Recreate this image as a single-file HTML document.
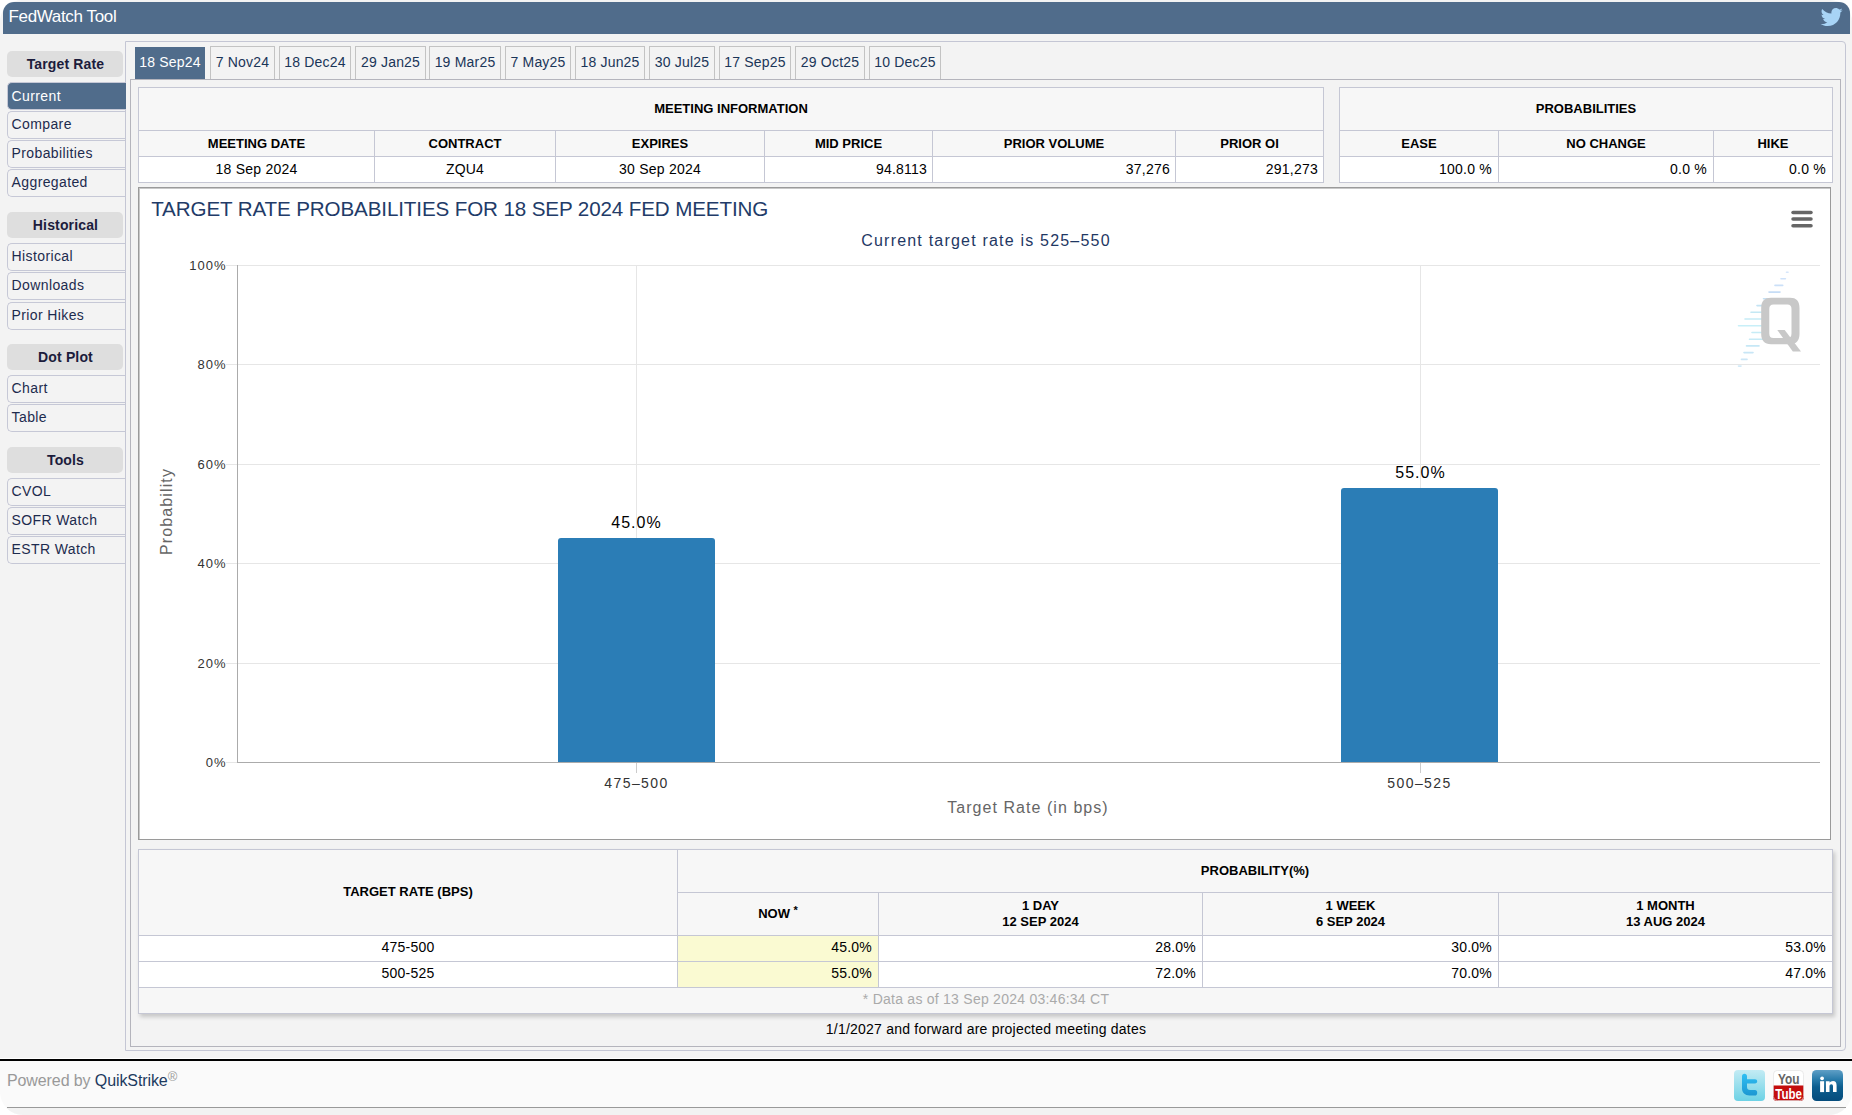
<!DOCTYPE html>
<html><head><meta charset="utf-8"><title>FedWatch Tool</title>
<style>
html,body{margin:0;padding:0;}
body{width:1852px;height:1115px;position:relative;overflow:hidden;background:#fff;font-family:"Liberation Sans", sans-serif;}
.t{position:absolute;white-space:nowrap;}
.r{position:absolute;box-sizing:border-box;}
</style></head><body>
<div class="r" style="left:0px;top:0px;width:1852px;height:1058px;background:#f3f3f3;border-radius:22px 22px 0 0;"></div><div class="r" style="left:3px;top:2px;width:1847px;height:32px;background:#506c8b;border-radius:11px 11px 0 0;"></div><div class="t" style="left:8.5px;top:7.61px;font-size:17px;line-height:17px;font-weight:normal;color:#fff;letter-spacing:-0.35px;">FedWatch Tool</div><svg style="position:absolute;left:1820px;top:6px" width="24" height="22" viewBox="0 0 24 24"><path fill="#a8d4f6" d="M23.6 4.6c-.9.4-1.8.6-2.8.8 1-.6 1.8-1.6 2.1-2.7-1 .6-2 1-3.1 1.2C18.9 2.9 17.6 2.3 16.2 2.3c-2.7 0-4.9 2.2-4.9 4.9 0 .4 0 .8.1 1.1C7.3 8.100 3.700 6.200 1.300 3.200c-.4.700-.7 1.600-.7 2.500 0 1.700.9 3.200 2.200 4.100-.8 0-1.600-.2-2.200-.6v.1c0 2.400 1.700 4.400 3.900 4.800-.4.1-.8.2-1.300.2-.3 0-.6 0-.9-.1.6 2 2.400 3.400 4.600 3.400-1.700 1.300-3.800 2.100-6.100 2.100-.4 0-.8 0-1.200-.1 2.200 1.400 4.800 2.200 7.500 2.200 9.100 0 14-7.500 14-14v-.6c1-.7 1.800-1.600 2.500-2.500z"/></svg><div class="r" style="left:125px;top:41px;width:1721px;height:1010px;border:1px solid #c4c6d4;border-radius:0 4px 4px 0;background:#f3f3f3;"></div><div class="r" style="left:135px;top:47px;width:70px;height:33px;background:#506c8b;"></div><div class="t" style="left:135.0px;width:70px;text-align:center;top:54.85px;font-size:14px;line-height:14px;font-weight:normal;color:#fff;letter-spacing:0.2px;">18 Sep24</div><div class="r" style="left:210px;top:46px;width:65px;height:34px;background:#f3f3f3;border:1px solid #c3c3c3;border-bottom:none;"></div><div class="t" style="left:210.0px;width:65px;text-align:center;top:54.85px;font-size:14px;line-height:14px;font-weight:normal;color:#1a3558;letter-spacing:0.2px;">7 Nov24</div><div class="r" style="left:279px;top:46px;width:72px;height:34px;background:#f3f3f3;border:1px solid #c3c3c3;border-bottom:none;"></div><div class="t" style="left:279.0px;width:72px;text-align:center;top:54.85px;font-size:14px;line-height:14px;font-weight:normal;color:#1a3558;letter-spacing:0.2px;">18 Dec24</div><div class="r" style="left:355px;top:46px;width:71px;height:34px;background:#f3f3f3;border:1px solid #c3c3c3;border-bottom:none;"></div><div class="t" style="left:355.0px;width:71px;text-align:center;top:54.85px;font-size:14px;line-height:14px;font-weight:normal;color:#1a3558;letter-spacing:0.2px;">29 Jan25</div><div class="r" style="left:429px;top:46px;width:72px;height:34px;background:#f3f3f3;border:1px solid #c3c3c3;border-bottom:none;"></div><div class="t" style="left:429.0px;width:72px;text-align:center;top:54.85px;font-size:14px;line-height:14px;font-weight:normal;color:#1a3558;letter-spacing:0.2px;">19 Mar25</div><div class="r" style="left:505px;top:46px;width:66px;height:34px;background:#f3f3f3;border:1px solid #c3c3c3;border-bottom:none;"></div><div class="t" style="left:505.0px;width:66px;text-align:center;top:54.85px;font-size:14px;line-height:14px;font-weight:normal;color:#1a3558;letter-spacing:0.2px;">7 May25</div><div class="r" style="left:575px;top:46px;width:70px;height:34px;background:#f3f3f3;border:1px solid #c3c3c3;border-bottom:none;"></div><div class="t" style="left:575.0px;width:70px;text-align:center;top:54.85px;font-size:14px;line-height:14px;font-weight:normal;color:#1a3558;letter-spacing:0.2px;">18 Jun25</div><div class="r" style="left:649px;top:46px;width:66px;height:34px;background:#f3f3f3;border:1px solid #c3c3c3;border-bottom:none;"></div><div class="t" style="left:649.0px;width:66px;text-align:center;top:54.85px;font-size:14px;line-height:14px;font-weight:normal;color:#1a3558;letter-spacing:0.2px;">30 Jul25</div><div class="r" style="left:719px;top:46px;width:72px;height:34px;background:#f3f3f3;border:1px solid #c3c3c3;border-bottom:none;"></div><div class="t" style="left:719.0px;width:72px;text-align:center;top:54.85px;font-size:14px;line-height:14px;font-weight:normal;color:#1a3558;letter-spacing:0.2px;">17 Sep25</div><div class="r" style="left:795px;top:46px;width:70px;height:34px;background:#f3f3f3;border:1px solid #c3c3c3;border-bottom:none;"></div><div class="t" style="left:795.0px;width:70px;text-align:center;top:54.85px;font-size:14px;line-height:14px;font-weight:normal;color:#1a3558;letter-spacing:0.2px;">29 Oct25</div><div class="r" style="left:869px;top:46px;width:72px;height:34px;background:#f3f3f3;border:1px solid #c3c3c3;border-bottom:none;"></div><div class="t" style="left:869.0px;width:72px;text-align:center;top:54.85px;font-size:14px;line-height:14px;font-weight:normal;color:#1a3558;letter-spacing:0.2px;">10 Dec25</div><div class="r" style="left:130px;top:79px;width:1711px;height:968px;border:1px solid #b4b4bc;background:#f3f3f3;"></div><div class="r" style="left:7px;top:51px;width:116px;height:26px;background:#dedede;border-radius:5px;"></div><div class="t" style="left:7.5px;width:116px;text-align:center;top:57.05px;font-size:14px;line-height:14px;font-weight:bold;color:#1c1c3c;letter-spacing:0.15px;">Target Rate</div><div class="r" style="left:7px;top:82px;width:119px;height:28px;background:#506c8b;border:1px solid #c6c8d6;border-right:none;border-radius:5px 0 0 5px;"></div><div class="t" style="left:11.6px;top:88.95px;font-size:14px;line-height:14px;font-weight:normal;color:#fff;letter-spacing:0.38px;">Current</div><div class="r" style="left:7px;top:111px;width:118px;height:28px;background:#f3f3f3;border:1px solid #c6c8d6;border-right:none;border-radius:5px 0 0 5px;"></div><div class="t" style="left:11.6px;top:117.15px;font-size:14px;line-height:14px;font-weight:normal;color:#1d2b4e;letter-spacing:0.38px;">Compare</div><div class="r" style="left:7px;top:140px;width:118px;height:28px;background:#f3f3f3;border:1px solid #c6c8d6;border-right:none;border-radius:5px 0 0 5px;"></div><div class="t" style="left:11.6px;top:146.15px;font-size:14px;line-height:14px;font-weight:normal;color:#1d2b4e;letter-spacing:0.38px;">Probabilities</div><div class="r" style="left:7px;top:169px;width:118px;height:28px;background:#f3f3f3;border:1px solid #c6c8d6;border-right:none;border-radius:5px 0 0 5px;"></div><div class="t" style="left:11.6px;top:175.15px;font-size:14px;line-height:14px;font-weight:normal;color:#1d2b4e;letter-spacing:0.38px;">Aggregated</div><div class="r" style="left:7px;top:212px;width:116px;height:26px;background:#dedede;border-radius:5px;"></div><div class="t" style="left:7.5px;width:116px;text-align:center;top:218.05px;font-size:14px;line-height:14px;font-weight:bold;color:#1c1c3c;letter-spacing:0.15px;">Historical</div><div class="r" style="left:7px;top:243px;width:118px;height:28px;background:#f3f3f3;border:1px solid #c6c8d6;border-right:none;border-radius:5px 0 0 5px;"></div><div class="t" style="left:11.6px;top:249.15px;font-size:14px;line-height:14px;font-weight:normal;color:#1d2b4e;letter-spacing:0.38px;">Historical</div><div class="r" style="left:7px;top:272px;width:118px;height:28px;background:#f3f3f3;border:1px solid #c6c8d6;border-right:none;border-radius:5px 0 0 5px;"></div><div class="t" style="left:11.6px;top:278.15px;font-size:14px;line-height:14px;font-weight:normal;color:#1d2b4e;letter-spacing:0.38px;">Downloads</div><div class="r" style="left:7px;top:302px;width:118px;height:28px;background:#f3f3f3;border:1px solid #c6c8d6;border-right:none;border-radius:5px 0 0 5px;"></div><div class="t" style="left:11.6px;top:308.15px;font-size:14px;line-height:14px;font-weight:normal;color:#1d2b4e;letter-spacing:0.38px;">Prior Hikes</div><div class="r" style="left:7px;top:344px;width:116px;height:26px;background:#dedede;border-radius:5px;"></div><div class="t" style="left:7.5px;width:116px;text-align:center;top:350.05px;font-size:14px;line-height:14px;font-weight:bold;color:#1c1c3c;letter-spacing:0.15px;">Dot Plot</div><div class="r" style="left:7px;top:375px;width:118px;height:28px;background:#f3f3f3;border:1px solid #c6c8d6;border-right:none;border-radius:5px 0 0 5px;"></div><div class="t" style="left:11.6px;top:381.15px;font-size:14px;line-height:14px;font-weight:normal;color:#1d2b4e;letter-spacing:0.38px;">Chart</div><div class="r" style="left:7px;top:404px;width:118px;height:28px;background:#f3f3f3;border:1px solid #c6c8d6;border-right:none;border-radius:5px 0 0 5px;"></div><div class="t" style="left:11.6px;top:410.15px;font-size:14px;line-height:14px;font-weight:normal;color:#1d2b4e;letter-spacing:0.38px;">Table</div><div class="r" style="left:7px;top:447px;width:116px;height:26px;background:#dedede;border-radius:5px;"></div><div class="t" style="left:7.5px;width:116px;text-align:center;top:453.05px;font-size:14px;line-height:14px;font-weight:bold;color:#1c1c3c;letter-spacing:0.15px;">Tools</div><div class="r" style="left:7px;top:478px;width:118px;height:28px;background:#f3f3f3;border:1px solid #c6c8d6;border-right:none;border-radius:5px 0 0 5px;"></div><div class="t" style="left:11.6px;top:484.15px;font-size:14px;line-height:14px;font-weight:normal;color:#1d2b4e;letter-spacing:0.38px;">CVOL</div><div class="r" style="left:7px;top:507px;width:118px;height:28px;background:#f3f3f3;border:1px solid #c6c8d6;border-right:none;border-radius:5px 0 0 5px;"></div><div class="t" style="left:11.6px;top:513.15px;font-size:14px;line-height:14px;font-weight:normal;color:#1d2b4e;letter-spacing:0.38px;">SOFR Watch</div><div class="r" style="left:7px;top:536px;width:118px;height:28px;background:#f3f3f3;border:1px solid #c6c8d6;border-right:none;border-radius:5px 0 0 5px;"></div><div class="t" style="left:11.6px;top:542.15px;font-size:14px;line-height:14px;font-weight:normal;color:#1d2b4e;letter-spacing:0.38px;">ESTR Watch</div><div class="r" style="left:138px;top:87px;width:1186px;height:96px;background:#f7f7f7;"></div><div class="r" style="left:138px;top:156px;width:1186px;height:27px;background:#fff;"></div><div class="r" style="left:138px;top:87px;width:1186px;height:1px;background:#c5c7d4"></div><div class="r" style="left:138px;top:130px;width:1186px;height:1px;background:#c5c7d4"></div><div class="r" style="left:138px;top:156px;width:1186px;height:1px;background:#c5c7d4"></div><div class="r" style="left:138px;top:182px;width:1186px;height:1px;background:#c5c7d4"></div><div class="r" style="left:138px;top:87px;width:1px;height:96px;background:#c5c7d4"></div><div class="r" style="left:1323px;top:87px;width:1px;height:96px;background:#c5c7d4"></div><div class="r" style="left:374px;top:130px;width:1px;height:53px;background:#c5c7d4"></div><div class="r" style="left:555px;top:130px;width:1px;height:53px;background:#c5c7d4"></div><div class="r" style="left:764px;top:130px;width:1px;height:53px;background:#c5c7d4"></div><div class="r" style="left:932px;top:130px;width:1px;height:53px;background:#c5c7d4"></div><div class="r" style="left:1175px;top:130px;width:1px;height:53px;background:#c5c7d4"></div><div class="t" style="left:531.0px;width:400px;text-align:center;top:102.20px;font-size:13px;line-height:13px;font-weight:bold;color:#000;">MEETING INFORMATION</div><div class="t" style="left:138.5px;width:236px;text-align:center;top:136.80px;font-size:13px;line-height:13px;font-weight:bold;color:#000;">MEETING DATE</div><div class="t" style="left:138.5px;width:236px;text-align:center;top:161.85px;font-size:14px;line-height:14px;font-weight:normal;color:#000;letter-spacing:0.22px;">18 Sep 2024</div><div class="t" style="left:374.5px;width:181px;text-align:center;top:136.80px;font-size:13px;line-height:13px;font-weight:bold;color:#000;">CONTRACT</div><div class="t" style="left:374.5px;width:181px;text-align:center;top:161.85px;font-size:14px;line-height:14px;font-weight:normal;color:#000;letter-spacing:0.22px;">ZQU4</div><div class="t" style="left:555.5px;width:209px;text-align:center;top:136.80px;font-size:13px;line-height:13px;font-weight:bold;color:#000;">EXPIRES</div><div class="t" style="left:555.5px;width:209px;text-align:center;top:161.85px;font-size:14px;line-height:14px;font-weight:normal;color:#000;letter-spacing:0.22px;">30 Sep 2024</div><div class="t" style="left:764.5px;width:168px;text-align:center;top:136.80px;font-size:13px;line-height:13px;font-weight:bold;color:#000;">MID PRICE</div><div class="t" style="left:759px;width:168px;text-align:right;top:161.85px;font-size:14px;line-height:14px;font-weight:normal;color:#000;letter-spacing:0.22px;">94.8113</div><div class="t" style="left:932.5px;width:243px;text-align:center;top:136.80px;font-size:13px;line-height:13px;font-weight:bold;color:#000;">PRIOR VOLUME</div><div class="t" style="left:927px;width:243px;text-align:right;top:161.85px;font-size:14px;line-height:14px;font-weight:normal;color:#000;letter-spacing:0.22px;">37,276</div><div class="t" style="left:1175.5px;width:148px;text-align:center;top:136.80px;font-size:13px;line-height:13px;font-weight:bold;color:#000;">PRIOR OI</div><div class="t" style="left:1170px;width:148px;text-align:right;top:161.85px;font-size:14px;line-height:14px;font-weight:normal;color:#000;letter-spacing:0.22px;">291,273</div><div class="r" style="left:1339px;top:87px;width:494px;height:96px;background:#f7f7f7;"></div><div class="r" style="left:1339px;top:156px;width:494px;height:27px;background:#fff;"></div><div class="r" style="left:1339px;top:87px;width:494px;height:1px;background:#c5c7d4"></div><div class="r" style="left:1339px;top:130px;width:494px;height:1px;background:#c5c7d4"></div><div class="r" style="left:1339px;top:156px;width:494px;height:1px;background:#c5c7d4"></div><div class="r" style="left:1339px;top:182px;width:494px;height:1px;background:#c5c7d4"></div><div class="r" style="left:1339px;top:87px;width:1px;height:96px;background:#c5c7d4"></div><div class="r" style="left:1832px;top:87px;width:1px;height:96px;background:#c5c7d4"></div><div class="r" style="left:1498px;top:130px;width:1px;height:53px;background:#c5c7d4"></div><div class="r" style="left:1713px;top:130px;width:1px;height:53px;background:#c5c7d4"></div><div class="t" style="left:1386.0px;width:400px;text-align:center;top:102.20px;font-size:13px;line-height:13px;font-weight:bold;color:#000;">PROBABILITIES</div><div class="t" style="left:1339.5px;width:159px;text-align:center;top:136.80px;font-size:13px;line-height:13px;font-weight:bold;color:#000;">EASE</div><div class="t" style="left:1333px;width:159px;text-align:right;top:161.85px;font-size:14px;line-height:14px;font-weight:normal;color:#000;letter-spacing:0.22px;">100.0 %</div><div class="t" style="left:1498.5px;width:215px;text-align:center;top:136.80px;font-size:13px;line-height:13px;font-weight:bold;color:#000;">NO CHANGE</div><div class="t" style="left:1492px;width:215px;text-align:right;top:161.85px;font-size:14px;line-height:14px;font-weight:normal;color:#000;letter-spacing:0.22px;">0.0 %</div><div class="t" style="left:1713.5px;width:119px;text-align:center;top:136.80px;font-size:13px;line-height:13px;font-weight:bold;color:#000;">HIKE</div><div class="t" style="left:1707px;width:119px;text-align:right;top:161.85px;font-size:14px;line-height:14px;font-weight:normal;color:#000;letter-spacing:0.22px;">0.0 %</div><div class="r" style="left:138px;top:187px;width:1693px;height:653px;background:#fff;border:1px solid #9a9a9a;box-shadow:inset 1px 1px 0 #c8c8c8;"></div><div class="t" style="left:151.2px;top:198.56px;font-size:20.6px;line-height:20.6px;font-weight:normal;color:#223b68;letter-spacing:-0.12px;">TARGET RATE PROBABILITIES FOR 18 SEP 2024 FED MEETING</div><div class="t" style="left:786.0px;width:400px;text-align:center;top:233.46px;font-size:16px;line-height:16px;font-weight:normal;color:#1f3864;letter-spacing:1.2px;">Current target rate is 525&ndash;550</div><div class="r" style="left:226px;top:265px;width:1594px;height:1px;background:#e6e6e6"></div><div class="r" style="left:226px;top:364px;width:1594px;height:1px;background:#e6e6e6"></div><div class="r" style="left:226px;top:464px;width:1594px;height:1px;background:#e6e6e6"></div><div class="r" style="left:226px;top:563px;width:1594px;height:1px;background:#e6e6e6"></div><div class="r" style="left:226px;top:663px;width:1594px;height:1px;background:#e6e6e6"></div><div class="r" style="left:636px;top:265px;width:1px;height:497px;background:#e6e6e6"></div><div class="r" style="left:1420px;top:265px;width:1px;height:497px;background:#e6e6e6"></div><div class="r" style="left:237px;top:265px;width:1px;height:498px;background:#ababab"></div><div class="r" style="left:237px;top:762px;width:1583px;height:1px;background:#ababab"></div><div class="r" style="left:226px;top:762px;width:11px;height:1px;background:#e6e6e6"></div><div class="r" style="left:636px;top:763px;width:1px;height:10px;background:#cccccc"></div><div class="r" style="left:1420px;top:763px;width:1px;height:10px;background:#cccccc"></div><div class="t" style="left:166.5px;width:60px;text-align:right;top:258.90px;font-size:13px;line-height:13px;font-weight:normal;color:#333;letter-spacing:1.0px;">100%</div><div class="t" style="left:166.5px;width:60px;text-align:right;top:357.90px;font-size:13px;line-height:13px;font-weight:normal;color:#333;letter-spacing:1.0px;">80%</div><div class="t" style="left:166.5px;width:60px;text-align:right;top:457.90px;font-size:13px;line-height:13px;font-weight:normal;color:#333;letter-spacing:1.0px;">60%</div><div class="t" style="left:166.5px;width:60px;text-align:right;top:556.90px;font-size:13px;line-height:13px;font-weight:normal;color:#333;letter-spacing:1.0px;">40%</div><div class="t" style="left:166.5px;width:60px;text-align:right;top:656.90px;font-size:13px;line-height:13px;font-weight:normal;color:#333;letter-spacing:1.0px;">20%</div><div class="t" style="left:166.5px;width:60px;text-align:right;top:755.90px;font-size:13px;line-height:13px;font-weight:normal;color:#333;letter-spacing:1.0px;">0%</div><div class="r" style="left:558px;top:538px;width:157px;height:224px;background:#2b7db6;border-radius:3px 3px 0 0;"></div><div class="r" style="left:1341px;top:488px;width:157px;height:274px;background:#2b7db6;border-radius:3px 3px 0 0;"></div><div class="t" style="left:586.5px;width:100px;text-align:center;top:515.46px;font-size:16px;line-height:16px;font-weight:normal;color:#000;letter-spacing:1.0px;">45.0%</div><div class="t" style="left:1370.5px;width:100px;text-align:center;top:465.06px;font-size:16px;line-height:16px;font-weight:normal;color:#000;letter-spacing:1.0px;">55.0%</div><div class="t" style="left:586.5px;width:100px;text-align:center;top:775.65px;font-size:14px;line-height:14px;font-weight:normal;color:#333;letter-spacing:1.4px;">475&ndash;500</div><div class="t" style="left:1369.5px;width:100px;text-align:center;top:775.65px;font-size:14px;line-height:14px;font-weight:normal;color:#333;letter-spacing:1.4px;">500&ndash;525</div><div class="t" style="left:878.0px;width:300px;text-align:center;top:800.16px;font-size:16px;line-height:16px;font-weight:normal;color:#666;letter-spacing:1.05px;">Target Rate (in bps)</div><div class="t" style="left:126.5px;top:507px;width:80px;height:16px;font-size:16px;line-height:16px;color:#666;text-align:center;transform:rotate(-90deg);letter-spacing:1.12px;">Probability</div><svg style="position:absolute;left:1786px;top:206px" width="32" height="26"><g stroke="#666" stroke-width="3.5" stroke-linecap="round"><line x1="7" y1="6.5" x2="25" y2="6.5"/><line x1="7" y1="13" x2="25" y2="13"/><line x1="7" y1="19.7" x2="25" y2="19.7"/></g></svg><div class="r" style="left:138px;top:849px;width:1695px;height:165px;background:#f7f7f7;box-shadow:2px 3px 4px rgba(0,0,0,0.18);"></div><div class="r" style="left:139px;top:936px;width:1693px;height:51px;background:#fff;"></div><div class="r" style="left:678px;top:936px;width:200px;height:51px;background:#fafad2;"></div><div class="r" style="left:138px;top:849px;width:1695px;height:1px;background:#c5c7d4"></div><div class="r" style="left:138px;top:935px;width:1695px;height:1px;background:#c5c7d4"></div><div class="r" style="left:138px;top:961px;width:1695px;height:1px;background:#c5c7d4"></div><div class="r" style="left:138px;top:987px;width:1695px;height:1px;background:#c5c7d4"></div><div class="r" style="left:138px;top:1013px;width:1695px;height:1px;background:#c5c7d4"></div><div class="r" style="left:677px;top:892px;width:1156px;height:1px;background:#c5c7d4"></div><div class="r" style="left:138px;top:849px;width:1px;height:165px;background:#c5c7d4"></div><div class="r" style="left:1832px;top:849px;width:1px;height:165px;background:#c5c7d4"></div><div class="r" style="left:677px;top:849px;width:1px;height:139px;background:#c5c7d4"></div><div class="r" style="left:878px;top:892px;width:1px;height:96px;background:#c5c7d4"></div><div class="r" style="left:1202px;top:892px;width:1px;height:96px;background:#c5c7d4"></div><div class="r" style="left:1498px;top:892px;width:1px;height:96px;background:#c5c7d4"></div><div class="t" style="left:208.0px;width:400px;text-align:center;top:884.50px;font-size:13px;line-height:13px;font-weight:bold;color:#000;">TARGET RATE (BPS)</div><div class="t" style="left:1055.0px;width:400px;text-align:center;top:864.20px;font-size:13px;line-height:13px;font-weight:bold;color:#000;">PROBABILITY(%)</div><div class="t" style="left:678.0px;width:200px;text-align:center;top:906.70px;font-size:13px;line-height:13px;font-weight:bold;color:#000;">NOW <sup style="font-size:11px;vertical-align:4px;line-height:0">*</sup></div><div class="t" style="left:878.5px;width:324px;text-align:center;top:898.80px;font-size:13px;line-height:13px;font-weight:bold;color:#000;">1 DAY</div><div class="t" style="left:878.5px;width:324px;text-align:center;top:914.60px;font-size:13px;line-height:13px;font-weight:bold;color:#000;">12 SEP 2024</div><div class="t" style="left:1202.5px;width:296px;text-align:center;top:898.80px;font-size:13px;line-height:13px;font-weight:bold;color:#000;">1 WEEK</div><div class="t" style="left:1202.5px;width:296px;text-align:center;top:914.60px;font-size:13px;line-height:13px;font-weight:bold;color:#000;">6 SEP 2024</div><div class="t" style="left:1498.5px;width:334px;text-align:center;top:898.80px;font-size:13px;line-height:13px;font-weight:bold;color:#000;">1 MONTH</div><div class="t" style="left:1498.5px;width:334px;text-align:center;top:914.60px;font-size:13px;line-height:13px;font-weight:bold;color:#000;">13 AUG 2024</div><div class="t" style="left:258.0px;width:300px;text-align:center;top:940.05px;font-size:14px;line-height:14px;font-weight:normal;color:#000;letter-spacing:0.22px;">475-500</div><div class="t" style="left:672px;width:200px;text-align:right;top:940.05px;font-size:14px;line-height:14px;font-weight:normal;color:#000;letter-spacing:0.22px;">45.0%</div><div class="t" style="left:996px;width:200px;text-align:right;top:940.05px;font-size:14px;line-height:14px;font-weight:normal;color:#000;letter-spacing:0.22px;">28.0%</div><div class="t" style="left:1292px;width:200px;text-align:right;top:940.05px;font-size:14px;line-height:14px;font-weight:normal;color:#000;letter-spacing:0.22px;">30.0%</div><div class="t" style="left:1626px;width:200px;text-align:right;top:940.05px;font-size:14px;line-height:14px;font-weight:normal;color:#000;letter-spacing:0.22px;">53.0%</div><div class="t" style="left:258.0px;width:300px;text-align:center;top:966.05px;font-size:14px;line-height:14px;font-weight:normal;color:#000;letter-spacing:0.22px;">500-525</div><div class="t" style="left:672px;width:200px;text-align:right;top:966.05px;font-size:14px;line-height:14px;font-weight:normal;color:#000;letter-spacing:0.22px;">55.0%</div><div class="t" style="left:996px;width:200px;text-align:right;top:966.05px;font-size:14px;line-height:14px;font-weight:normal;color:#000;letter-spacing:0.22px;">72.0%</div><div class="t" style="left:1292px;width:200px;text-align:right;top:966.05px;font-size:14px;line-height:14px;font-weight:normal;color:#000;letter-spacing:0.22px;">70.0%</div><div class="t" style="left:1626px;width:200px;text-align:right;top:966.05px;font-size:14px;line-height:14px;font-weight:normal;color:#000;letter-spacing:0.22px;">47.0%</div><div class="t" style="left:786.0px;width:400px;text-align:center;top:992.15px;font-size:14px;line-height:14px;font-weight:normal;color:#aaa;letter-spacing:0.25px;">* Data as of 13 Sep 2024 03:46:34 CT</div><div class="t" style="left:736.0px;width:500px;text-align:center;top:1021.75px;font-size:14px;line-height:14px;font-weight:normal;color:#000;letter-spacing:0.22px;">1/1/2027 and forward are projected meeting dates</div><div class="r" style="left:0px;top:1059px;width:1852px;height:1px;background:#000"></div><div class="r" style="left:0px;top:1060px;width:1852px;height:1px;background:#000"></div><div style="position:absolute;left:0;top:1061px;width:1852px;height:54px;border-radius:0 0 23px 23px;overflow:hidden;background:#fafafa"><div style="position:absolute;left:0;top:47px;width:1852px;height:7px;background:#f2f2f2"></div></div><div class="r" style="left:7px;top:1107px;width:1839px;height:1px;background:#999"></div><div class="t" style="left:7px;top:1073px;font-size:16px;line-height:16px;color:#999;letter-spacing:-0.1px;">Powered by <span style="color:#1d3b60">QuikStrike</span><sup style="font-size:13px;vertical-align:5px;line-height:0;color:#999">&reg;</sup></div><svg style="position:absolute;left:1734px;top:1070px" width="31" height="31" viewBox="0 0 31 31"><defs><linearGradient id="tw" x1="0" y1="0" x2="0" y2="1"><stop offset="0" stop-color="#c3ebf4"/><stop offset="1" stop-color="#6dd2e5"/></linearGradient><linearGradient id="tt" x1="0" y1="0" x2="0" y2="1"><stop offset="0" stop-color="#30bff3"/><stop offset="1" stop-color="#1c97d2"/></linearGradient></defs><rect x="0" y="0" width="31" height="31" rx="4" fill="url(#tw)"/><path d="M10.5 3.8 C12 3.8 13 4.8 13 6.3 V9.2 H21 C22.4 9.2 23.2 10 23.2 11.3 C23.2 12.6 22.4 13.5 21 13.5 H13 V17 C13 19 14 20 16 20 H21 C22.4 20 23.2 20.9 23.2 22.7 C23.2 24.6 22.4 25.5 21 25.5 H15.5 C11 25.5 8 22.6 8 18.5 V6.3 C8 4.8 9 3.8 10.5 3.8 Z" fill="url(#tt)"/></svg><svg style="position:absolute;left:1773px;top:1070px" width="31" height="31" viewBox="0 0 31 31"><defs><clipPath id="yc"><rect x="0" y="0" width="31" height="31" rx="4"/></clipPath></defs><g clip-path="url(#yc)"><rect x="0" y="0" width="31" height="15.5" fill="#fff"/><rect x="0" y="15.5" width="31" height="16" fill="#c40d0d"/></g><rect x="0.4" y="0.4" width="30.2" height="30.2" rx="4" fill="none" stroke="#e2e2e2" stroke-width="0.8"/><text x="5" y="13.5" font-family="Liberation Sans" font-weight="bold" font-size="15.5" fill="#666" textLength="21.5" lengthAdjust="spacingAndGlyphs">You</text><text x="2.2" y="29.2" font-family="Liberation Sans" font-weight="bold" font-size="15.5" fill="#fff" textLength="26.8" lengthAdjust="spacingAndGlyphs">Tube</text></svg><svg style="position:absolute;left:1812px;top:1070px" width="31" height="31" viewBox="0 0 31 31"><defs><linearGradient id="li" x1="0" y1="0" x2="0" y2="1"><stop offset="0" stop-color="#5f9fc6"/><stop offset="0.3" stop-color="#2a7cab"/><stop offset="0.55" stop-color="#0c5d8e"/><stop offset="1" stop-color="#054c7c"/></linearGradient></defs><rect x="0" y="0" width="31" height="31" rx="4.5" fill="url(#li)"/><circle cx="10.1" cy="8.3" r="1.9" fill="#fff"/><rect x="8.1" y="11.2" width="4" height="10.9" fill="#fff"/><path d="M13.9 11.2 H17.6 V12.8 C18.3 11.7 19.5 11 21 11 C23.4 11 24.6 12.5 24.6 15.3 V22.1 H21 V16.2 C21 14.9 20.5 14.2 19.4 14.2 C18.2 14.2 17.5 15 17.5 16.4 V22.1 H13.9 Z" fill="#fff"/></svg><svg style="position:absolute;left:1735px;top:268px" width="70" height="102" viewBox="1735 268 70 102"><g stroke-width="1.6" stroke-linecap="round"><line x1="1786.5" y1="272.2" x2="1788" y2="272.2" stroke="#d6e6fb"/><line x1="1781" y1="278.7" x2="1785.4" y2="278.7" stroke="#cfe2fa"/><line x1="1775" y1="285.4" x2="1782.7" y2="285.4" stroke="#cbe0f8"/><line x1="1769" y1="292.1" x2="1780" y2="292.1" stroke="#c6ddf6"/><line x1="1763.5" y1="298.8" x2="1770" y2="298.8" stroke="#c4e0f4"/><line x1="1757" y1="305.6" x2="1763" y2="305.6" stroke="#c4e4f4"/><line x1="1751" y1="312.3" x2="1762" y2="312.3" stroke="#c4e8f4"/><line x1="1745" y1="319" x2="1762" y2="319" stroke="#c6ecf6"/><line x1="1738.5" y1="325.7" x2="1762" y2="325.7" stroke="#c8eff8"/><line x1="1752" y1="332.5" x2="1762" y2="332.5" stroke="#c6ecf6"/><line x1="1749.5" y1="339.2" x2="1762.5" y2="339.2" stroke="#c6eaf6"/><line x1="1746.5" y1="345.9" x2="1759" y2="345.9" stroke="#c6e8f6"/><line x1="1744" y1="352.6" x2="1753" y2="352.6" stroke="#c8e6f6"/><line x1="1741.5" y1="359.4" x2="1747" y2="359.4" stroke="#cce6f6"/><line x1="1738.5" y1="366.1" x2="1741" y2="366.1" stroke="#d2eaf8"/></g><path fill="#c8c8c8" fill-rule="evenodd" d="M1771 297.8 H1790 C1796.5 297.8 1799.5 301 1799.5 308 V334 C1799.5 340.5 1796.5 344.2 1790 344.2 H1771 C1764.5 344.2 1761.2 340.5 1761.2 334 V308 C1761.2 301 1764.5 297.8 1771 297.8 Z M1773.5 304.5 C1770.5 304.5 1769.3 306 1769.3 309 V333.5 C1769.3 336.5 1770.5 338.1 1773.5 338.1 H1787.3 C1790.3 338.1 1791.5 336.5 1791.5 333.5 V309 C1791.5 306 1790.3 304.5 1787.3 304.5 Z"/><path fill="#c8c8c8" d="M1777.3 330 H1784.7 L1801 351.6 H1792.8 Z"/></svg>
</body></html>
